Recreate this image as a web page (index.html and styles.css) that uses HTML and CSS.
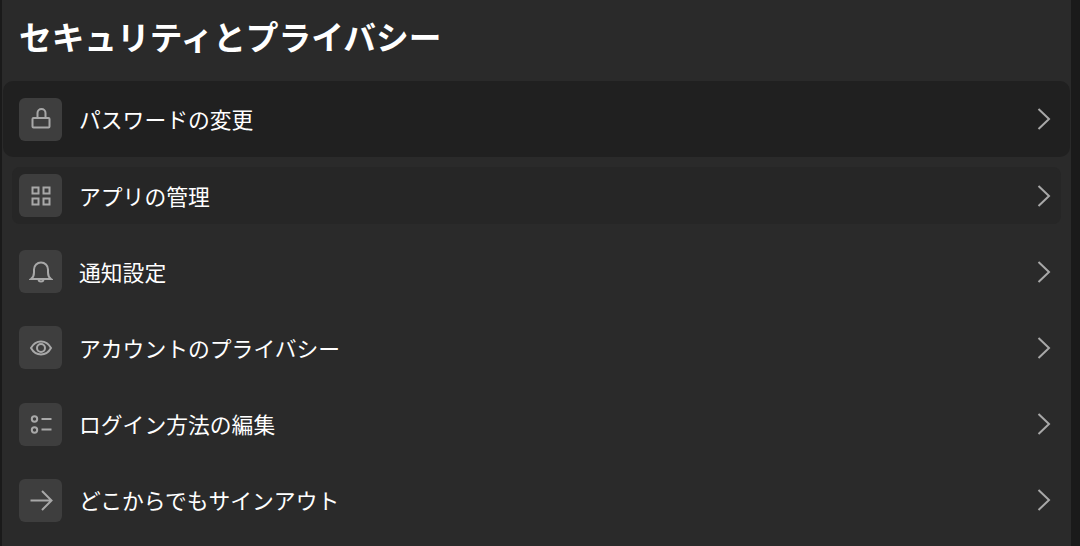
FILE: index.html
```html
<!DOCTYPE html>
<html lang="ja">
<head>
    <meta charset="UTF-8">
    <meta name="viewport" content="width=device-width, initial-scale=1.0">
    <title>セキュリティとプライバシー</title>
    <link rel="stylesheet" href="styles.css">
</head>
<body>
    <div class="panel">
        <h1 class="page-title">セキュリティとプライバシー</h1>

        <div class="menu">
            <div class="menu-row pressed">
                <div class="menu-icon">
                    <svg viewBox="0 0 24 24"><rect x="3.5" y="11" width="17" height="9.5" rx="1"/><path d="M8.500 11V6a4 4 0 0 1 8 0v5"/></svg>
                </div>
                <span class="menu-label">パスワードの変更</span>
                <svg class="chevron" viewBox="0 0 14 24"><path d="M1.5 2l10.5 10L1.5 22"/></svg>
            </div>

            <div class="menu-row hovered">
                <div class="menu-icon">
                    <svg viewBox="0 0 24 24"><rect x="3.500" y="3.500" width="6" height="6"/><rect x="14.500" y="3.500" width="6" height="6"/><rect x="3.500" y="14.500" width="6" height="6"/><rect x="14.500" y="14.500" width="6" height="6"/></svg>
                </div>
                <span class="menu-label">アプリの管理</span>
                <svg class="chevron" viewBox="0 0 14 24"><path d="M1.5 2l10.5 10L1.5 22"/></svg>
            </div>

            <div class="menu-row">
                <div class="menu-icon">
                    <svg viewBox="0 0 24 24"><path d="M2 19c2-1.500 3-3.500 3-6.500v-3a7 7 0 0 1 14 0v3c0 3 1 5 3 6.500z"/><path d="M9.500 19a2.500 2.500 0 0 0 5 0"/></svg>
                </div>
                <span class="menu-label">通知設定</span>
                <svg class="chevron" viewBox="0 0 14 24"><path d="M1.5 2l10.5 10L1.5 22"/></svg>
            </div>

            <div class="menu-row">
                <div class="menu-icon">
                    <svg viewBox="0 0 24 24"><path d="M2 12C4.500 7.500 8 5.500 12 5.500s7.500 2 10 6.500c-2.500 4.500-6 6.500-10 6.500S4.500 16.500 2 12z"/><circle cx="12" cy="12" r="4"/></svg>
                </div>
                <span class="menu-label">アカウントのプライバシー</span>
                <svg class="chevron" viewBox="0 0 14 24"><path d="M1.5 2l10.5 10L1.5 22"/></svg>
            </div>

            <div class="menu-row">
                <div class="menu-icon">
                    <svg viewBox="0 0 24 24"><circle cx="5.500" cy="7" r="2.700"/><circle cx="5.500" cy="18" r="2.700"/><path d="M12.500 7H22.500M12.500 17.500H22.500"/></svg>
                </div>
                <span class="menu-label">ログイン方法の編集</span>
                <svg class="chevron" viewBox="0 0 14 24"><path d="M1.5 2l10.5 10L1.5 22"/></svg>
            </div>

            <div class="menu-row">
                <div class="menu-icon">
                    <svg viewBox="0 0 24 24"><path d="M1.500 12.500h21M13 3l9.500 9.500L13 22"/></svg>
                </div>
                <span class="menu-label">どこからでもサインアウト</span>
                <svg class="chevron" viewBox="0 0 14 24"><path d="M1.5 2l10.5 10L1.5 22"/></svg>
            </div>
        </div>
    </div>
</body>
</html>
```

FILE: styles.css
```css
/* Reset and Base Styles */
* {
    margin: 0;
    padding: 0;
    box-sizing: border-box;
}

body {
    background-color: #1a1a1a;
    color: #fff;
    font-family: 'Noto Sans CJK JP', 'Noto Sans', sans-serif;
    height: 546px;
    overflow: hidden;
}

.panel {
    width: 1069px;
    height: 546px;
    margin-left: 2px;
    background-color: #2a2a2a;
    overflow: hidden;
}

.page-title {
    font-size: 32.7px;
    font-weight: 700;
    line-height: 46px;
    padding: 13px 0 0 17px;
}

/* Menu */
.menu {
    margin-top: 22px;
    padding: 0 10px;
}

.menu-row {
    display: flex;
    align-items: center;
    height: 57px;
    margin-bottom: 19.2px;
    padding: 0 10px 0 7px;
    border-radius: 8px;
}

.menu-row.pressed {
    height: 76px;
    margin: 0 -9px 10px;
    padding: 0 19px 0 16px;
    border-radius: 10px;
    background-color: #202020;
}

.menu-row.hovered {
    background-color: #262626;
}

.menu-icon {
    display: flex;
    align-items: center;
    justify-content: center;
    flex-shrink: 0;
    width: 43px;
    height: 43px;
    border-radius: 6px;
    background-color: #3e3e3e;
}

.menu-icon svg {
    width: 24px;
    height: 24px;
    fill: none;
    stroke: #a8a8a8;
    stroke-width: 2;
}

.menu-label {
    flex: 1;
    margin-left: 17px;
    font-size: 21.8px;
    line-height: 30px;
}

.chevron {
    width: 14px;
    height: 24px;
    fill: none;
    stroke: #a8a8a8;
    stroke-width: 2;
}
```
